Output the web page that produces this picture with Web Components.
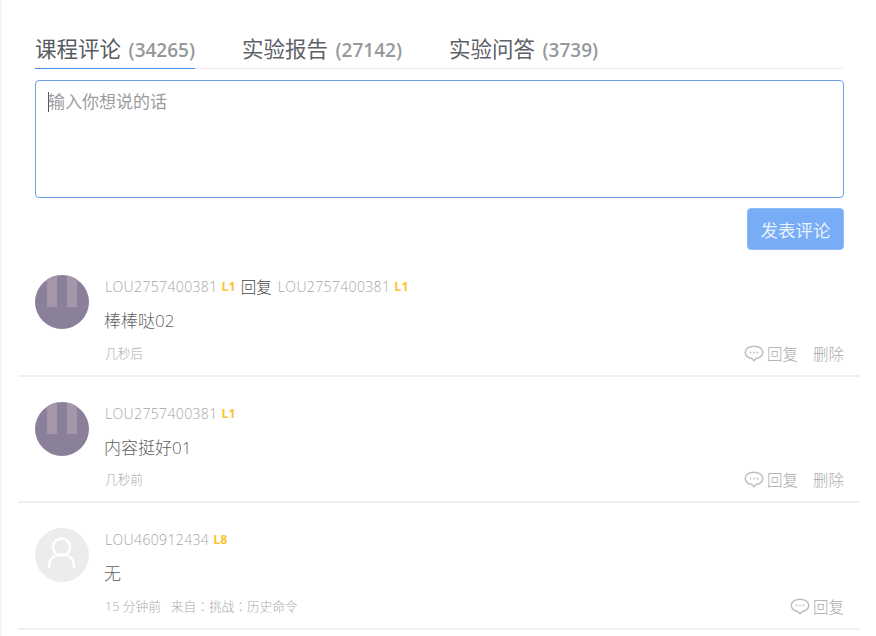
<!DOCTYPE html>
<html lang="zh">
<head>
<meta charset="utf-8">
<title>课程评论</title>
<style>
  html, body { margin: 0; height: 100%; background: #fff; overflow: hidden; }
  body { font-family: "Open Sans", "Noto Sans CJK SC", sans-serif; }
</style>
</head>
<body>
<comment-panel>
  <comment-tabs>
    <comment-tab count="34265" active>课程评论</comment-tab>
    <comment-tab count="27142">实验报告</comment-tab>
    <comment-tab count="3739">实验问答</comment-tab>
  </comment-tabs>
  <comment-box placeholder="输入你想说的话" action="发表评论"></comment-box>
  <comment-item name="LOU2757400381" level="L1" reply-to="LOU2757400381" reply-level="L1" avatar="photo" time="几秒后" deletable>棒棒哒02</comment-item>
  <comment-item name="LOU2757400381" level="L1" avatar="photo" time="几秒前" deletable>内容挺好01</comment-item>
  <comment-item name="LOU460912434" level="L8" avatar="blank" time="15 分钟前" source="来自：挑战：历史命令">无</comment-item>
</comment-panel>

<script>
customElements.define("comment-panel", class extends HTMLElement {
  constructor() {
    super();
    this.attachShadow({ mode: "open" }).innerHTML = `
      <style>
        :host { display: block; height: 636px; width: 876px; box-sizing: border-box; border-left: 2px solid #f5f5f5; padding: 29px 16px 0 16px; }
      </style>
      <slot></slot>`;
  }
});

customElements.define("comment-tabs", class extends HTMLElement {
  constructor() {
    super();
    this.attachShadow({ mode: "open" }).innerHTML = `
      <style>
        :host { display: flex; gap: 47px; margin: 0 16px 0 17px; border-bottom: 1px solid #eeeeee; height: 39px; }
      </style>
      <slot></slot>`;
  }
});

customElements.define("comment-tab", class extends HTMLElement {
  constructor() {
    super();
    this.attachShadow({ mode: "open" }).innerHTML = `
      <style>
        :host { display: block; height: 40px; box-sizing: border-box; white-space: nowrap; line-height: 39px; color: #5d6268; font-size: 21.5px; }
        :host([active]) { border-bottom: 1px solid #4a90e8; color: #555a60; }
        span { font-size: 19px; font-weight: 600; color: #96999c; margin-left: 2px; }
      </style>
      <slot></slot> <span></span>`;
    this.shadowRoot.querySelector("span").textContent = `(${this.getAttribute("count")})`;
  }
});

customElements.define("comment-box", class extends HTMLElement {
  constructor() {
    super();
    this.attachShadow({ mode: "open" }).innerHTML = `
      <style>
        :host { display: flex; flex-direction: column; align-items: flex-end; margin: 11px 16px 0 17px; }
        .input { box-sizing: border-box; width: 100%; height: 118px; border: 1px solid #6d9fe6; border-radius: 4px; padding: 9px 12px; font-size: 17px; line-height: 24px; color: #9a9da0; display: flex; }
        .caret { width: 1px; height: 20px; margin-top: 2px; background: #555; margin-right: -1px; flex: none; }
        button { margin-top: 10px; width: 97px; height: 42px; border: 1px solid #8fbcf6; border-radius: 4px; background: #78adf5; color: #e8f1fd; font: inherit; font-size: 17.500px; padding: 0; }
      </style>
      <div class="input"><i class="caret"></i><span class="ph"></span></div>
      <button type="button"></button>`;
    this.shadowRoot.querySelector(".ph").textContent = this.getAttribute("placeholder");
    this.shadowRoot.querySelector("button").textContent = this.getAttribute("action");
  }
});

const AVATARS = {
  photo: `<svg viewBox="0 0 54 54" width="54" height="54"><rect width="54" height="54" fill="#8a8099"/><rect x="12" y="0" width="10" height="32" fill="#a596aa"/><rect x="32" y="0" width="10" height="32" fill="#a596aa"/></svg>`,
  blank: `<svg viewBox="0 0 54 54" width="54" height="54"><rect width="54" height="54" fill="#ececec"/><circle cx="26.500" cy="19" r="8.500" fill="none" stroke="#fff" stroke-width="2.500"/><path d="M14 39c0-8 5-12.500 12.500-12.500S39 31 39 39" fill="none" stroke="#fff" stroke-width="2.500" stroke-linecap="round"/></svg>`
};

customElements.define("comment-item", class extends HTMLElement {
  constructor() {
    super();
    const a = n => this.getAttribute(n);
    this.attachShadow({ mode: "open" }).innerHTML = `
      <style>
        :host { display: grid; grid-template-columns: 54px 1fr; column-gap: 16px; height: 126.500px; box-sizing: border-box; padding: 25px 16px 0 17px; border-bottom: 2px solid #efefef; }
        .avatar { height: 54px; }
        .avatar svg { display: block; border-radius: 50%; }
        .body { min-width: 0; font-weight: 300; }
        .head { height: 24px; line-height: 24px; font-size: 14px; letter-spacing: .36px; color: #a6a6a6; white-space: nowrap; display: flex; gap: 4px; }
        .lv { color: #f7c433; font-size: 12.500px; font-weight: 700; letter-spacing: 0; }
        .rep { color: #444; margin: 0 2px 0 1px; font-size: 15.500px; letter-spacing: 0; }
        .text { margin: 11px 0 0 -1px; font-size: 17px; line-height: 22px; color: #5f5f5f; }
        .foot { margin-top: 9px; display: flex; justify-content: space-between; align-items: center; height: 22px; font-size: 12.700px; color: #aaa; }
        .meta span + span { margin-left: 10px; font-family: "Noto Sans CJK TC", sans-serif; }
        .acts { display: flex; align-items: center; font-size: 15.500px; color: #aaa; margin-top: 2px; }
        .acts svg { margin: 0 3px 0 -1px; }
        .del { margin-left: 15px; }
      </style>
      <div class="avatar">${AVATARS[a("avatar")]}</div>
      <div class="body">
        <div class="head">
          <span>${a("name")}</span><span class="lv">${a("level")}</span>
          ${a("reply-to") ? `<span class="rep">回复</span><span>${a("reply-to")}</span><span class="lv">${a("reply-level")}</span>` : ""}
        </div>
        <div class="text"><slot></slot></div>
        <div class="foot">
          <div class="meta"><span>${a("time")}</span>${a("source") ? `<span lang="zh-Hant">${a("source")}</span>` : ""}</div>
          <div class="acts">
            <svg viewBox="0 0 20 17" width="20" height="17" fill="none"><path d="M10 1.200c5 0 8.800 2.600 8.800 6.100S15.200 13.200 12.500 13.300L10 15.800 7.500 13.300C4.800 13.200 1.200 10.800 1.200 7.300 1.200 3.800 5 1.200 10 1.200z" stroke="#bfbfbf" stroke-width="1.500" stroke-linejoin="round"/><circle cx="6.500" cy="7.500" r=".9" fill="#bfbfbf"/><circle cx="10" cy="7.500" r=".9" fill="#bfbfbf"/><circle cx="13.500" cy="7.500" r=".9" fill="#bfbfbf"/></svg>
            <span>回复</span>${this.hasAttribute("deletable") ? `<span class="del">删除</span>` : ""}
          </div>
        </div>
      </div>`;
  }
});
</script>
</body>
</html>
